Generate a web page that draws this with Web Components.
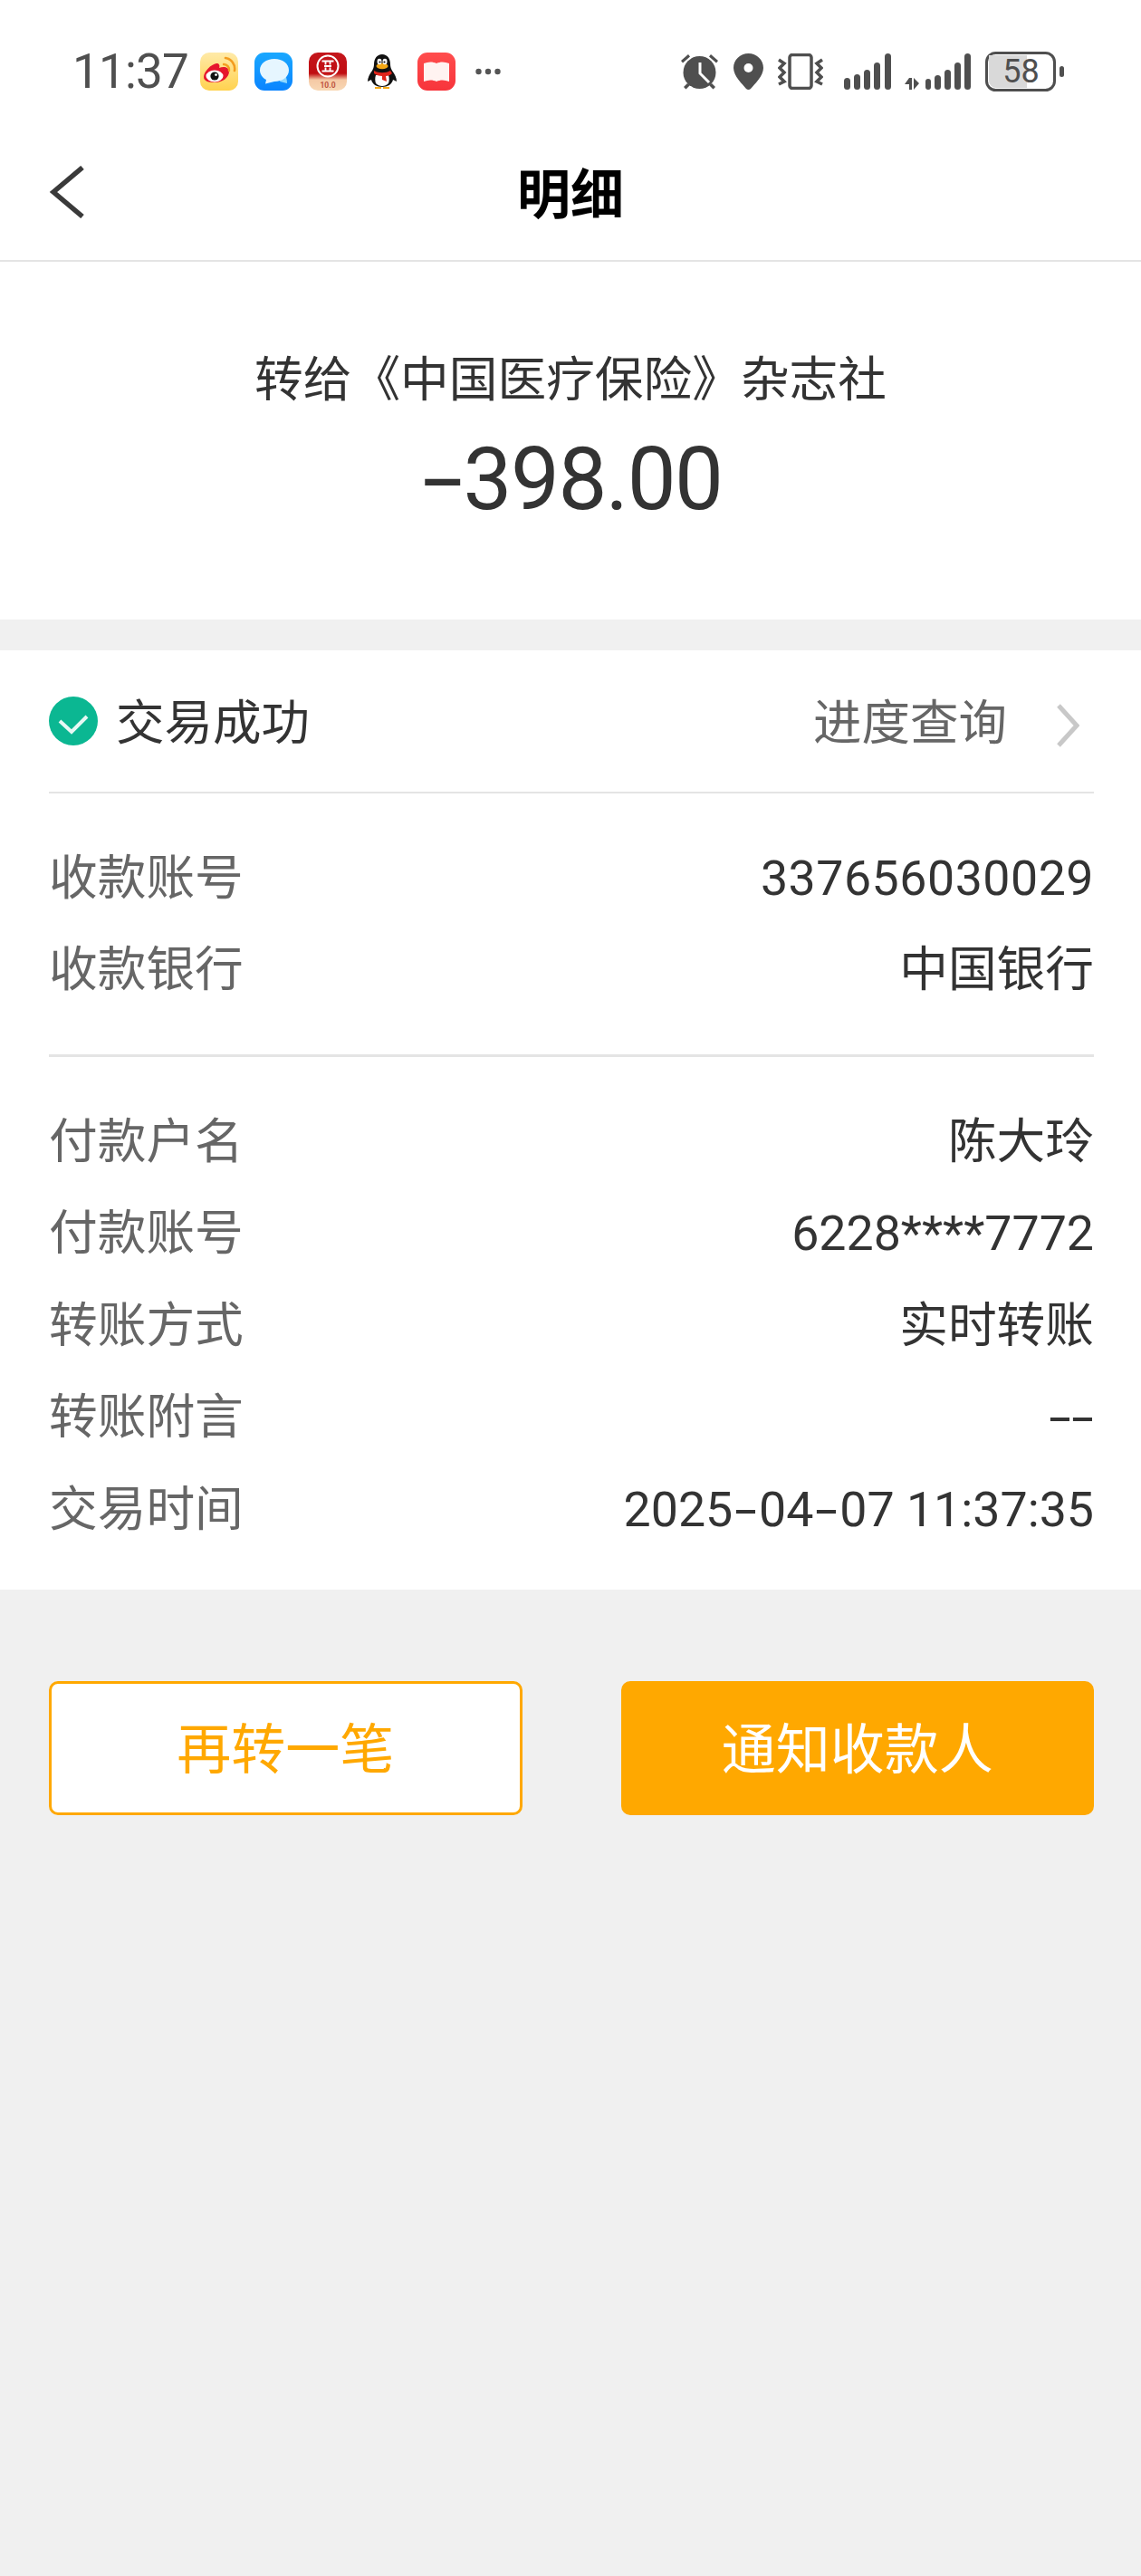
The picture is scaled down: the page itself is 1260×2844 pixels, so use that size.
<!DOCTYPE html>
<html lang="zh">
<head>
<meta charset="utf-8">
<title>明细</title>
<style>
  html, body { margin: 0; padding: 0; background: #f0f0f0; }
  body {
    width: 1260px;
    min-height: 2844px;
    font-family: Roboto, "Noto Sans CJK SC", sans-serif;
  }
</style>
</head>
<body>
<status-bar></status-bar>
<nav-bar>明细</nav-bar>
<amount-head payee="转给《中国医疗保险》杂志社" amount="398.00"></amount-head>
<detail-card>
  <trade-state>交易成功</trade-state>
  <detail-group>
    <detail-row num label="收款账号">337656030029</detail-row>
    <detail-row label="收款银行">中国银行</detail-row>
  </detail-group>
  <detail-group>
    <detail-row label="付款户名">陈大玲</detail-row>
    <detail-row label="付款账号">6228****7772</detail-row>
    <detail-row label="转账方式">实时转账</detail-row>
    <detail-row label="转账附言"><span class="dash sm">-</span><span class="dash sm">-</span></detail-row>
    <detail-row label="交易时间">2025<span class="dash">-</span>04<span class="dash">-</span>07 11:37:35</detail-row>
  </detail-group>
</detail-card>
<action-bar>
  <action-button>再转一笔</action-button>
  <action-button primary>通知收款人</action-button>
</action-bar>

<script>
"use strict";

class StatusBar extends HTMLElement {
  constructor() {
    super();
    this._root = this.attachShadow({ mode: "open" });
    this._root.innerHTML = this._template;
  }

  get _template() {
    return /*html*/ `
      <style>
        :host {
          display: flex;
          align-items: center;
          justify-content: space-between;
          height: 140px;
          padding: 18px 85px 0 80px;
          box-sizing: border-box;
          background: #fff;
          color: #4f4f4f;
        }
        .side { display: flex; align-items: center; }
        .time { font: 400 53px/1 Roboto, sans-serif; width: 141px; letter-spacing: -.8px; }
        .apps { display: flex; align-items: center; gap: 18px; }
        .sys { gap: 16px; }
        svg { display: block; }
        .dots { margin-left: 4px; }
        .sig-a { margin-left: 7px; }
        .sig-b { margin-left: -1px; }
      </style>
      <div class="side">
        <span class="time">11:37</span>
        <div class="apps">
          <svg width="42" height="42" viewBox="0 0 42 42">
            <defs><linearGradient id="wb" x1="0" y1="0" x2="0" y2="1"><stop offset="0" stop-color="#ffeaa8"/><stop offset="1" stop-color="#ffd24f"/></linearGradient></defs>
            <rect width="42" height="42" rx="10" fill="url(#wb)"/>
            <path d="M4 27c0-6 8-14 14-15 3 0 4 2 3 5 5-2 11-1 11 4 0 7-8 12-15 12S4 32 4 27z" fill="#e6162d"/>
            <ellipse cx="16" cy="26" rx="9.500" ry="6.500" fill="#fff"/>
            <circle cx="16" cy="26" r="4.600" fill="#111"/>
            <circle cx="17.500" cy="24.600" r="1.400" fill="#fff"/>
            <path d="M26 13a6 6 0 0 1 6 7" fill="none" stroke="#f39c1f" stroke-width="2.400" stroke-linecap="round"/>
            <path d="M28 6a12 12 0 0 1 10 14" fill="none" stroke="#f39c1f" stroke-width="2.600" stroke-linecap="round"/>
          </svg>
          <svg width="42" height="42" viewBox="0 0 42 42">
            <defs><linearGradient id="ms" x1="0" y1="0" x2="0" y2="1"><stop offset="0" stop-color="#1aa8ff"/><stop offset="1" stop-color="#0a84ff"/></linearGradient></defs>
            <rect width="42" height="42" rx="11" fill="url(#ms)"/>
            <path d="M32 22c3 3 4 8 4 12l-8-2z" fill="#8fd8ff"/>
            <path d="M22 7c9 0 16 5 16 12.500S31 32 22 32l-10 2.500 1-4.500C9 28 6 24 6 19.500 6 12 13 7 22 7z" fill="#e6f6ff"/>
          </svg>
          <svg width="42" height="42" viewBox="0 0 42 42">
            <defs><linearGradient id="ic" x1="0" y1="0" x2="0" y2="1"><stop offset="0" stop-color="#c4161c"/><stop offset=".55" stop-color="#c00d12"/><stop offset=".72" stop-color="#f5c9a5"/><stop offset="1" stop-color="#f8d8b5"/></linearGradient></defs>
            <rect width="42" height="42" rx="10" fill="url(#ic)"/>
            <circle cx="21" cy="15" r="11.500" fill="none" stroke="#fff" stroke-width="2"/>
            <path d="M14.500 9.500h13M14.500 20.500h13M17 15h8M18.500 9.500v4M23.500 9.500v4M18.500 16.500v4M23.500 16.500v4" stroke="#fff" stroke-width="1.800" fill="none"/>
            <text x="21" y="39" text-anchor="middle" font-family="Roboto, sans-serif" font-size="8.500" font-weight="700" fill="#c0543f">10.0</text>
          </svg>
          <svg width="42" height="42" viewBox="0 0 42 42">
            <path d="M21 2c-6 0-9 5-9 11 0 3-1 5-2 7-3 4-5 8-5 12l4-2c1 5 6 8 12 8s11-3 12-8l4 2c0-4-2-8-5-12-1-2-2-4-2-7 0-6-3-11-9-11z" fill="#111"/>
            <path d="M14 25c-1 3-1 6 0 9 2 2 4 3 7 3s5-1 7-3c1-3 1-6 0-9z" fill="#fff"/>
            <ellipse cx="21" cy="15" rx="6.500" ry="3.200" fill="#f5a815"/>
            <path d="M12 20c5 3 13 3 18 0l2 3c-2 2-4 3-7 3l1 6-5-2v-4c-3 0-7-1-9-3z" fill="#e1251b"/>
            <ellipse cx="18" cy="10" rx="2.500" ry="3.200" fill="#fff"/>
            <ellipse cx="24" cy="10" rx="2.500" ry="3.200" fill="#fff"/>
            <circle cx="18.500" cy="10.500" r="1.100" fill="#111"/>
            <circle cx="23.500" cy="10.500" r="1.100" fill="#111"/>
            <path d="M13 38h7v2h-7zM22 38h7v2h-7z" fill="#f5a815"/>
          </svg>
          <svg width="42" height="42" viewBox="0 0 42 42">
            <defs><linearGradient id="bk" x1="0" y1="0" x2="0" y2="1"><stop offset="0" stop-color="#ff4d4d"/><stop offset="1" stop-color="#f7343b"/></linearGradient></defs>
            <rect width="42" height="42" rx="11" fill="url(#bk)"/>
            <path d="M7 12c5-2 10-2 14 0 4-2 9-2 14 0v20c-5-2-10-2-14 0-4-2-9-2-14 0z" fill="#fff3f1"/>
          </svg>
          <svg class="dots" width="28" height="8" viewBox="0 0 28 8" fill="#555">
            <circle cx="3.500" cy="4" r="3.200"/><circle cx="14" cy="4" r="3.200"/><circle cx="24.500" cy="4" r="3.200"/>
          </svg>
        </div>
      </div>
      <div class="side sys">
        <svg width="43" height="40" viewBox="0 0 43 40" fill="#4f4f4f">
          <path d="M1 8l8-7 2 2.500-8 7zM42 8l-8-7-2 2.500 8 7z"/>
          <path d="M8 33l-4 4 2.500 2.500 4.500-4.500zM35 33l4 4-2.500 2.500-4.500-4.500z"/>
          <circle cx="21.500" cy="21" r="18"/>
          <path d="M22 10v12l10 10" fill="none" stroke="#fff" stroke-width="3"/>
        </svg>
        <svg width="33" height="40" viewBox="0 0 33 40">
          <path d="M16.500 0C7.400 0 0 7 0 16c0 9 10 18 14 23 1.300 1.300 3.700 1.300 5 0 4-5 14-14 14-23C33 7 25.600 0 16.500 0z" fill="#4f4f4f"/>
          <circle cx="16.500" cy="16" r="5" fill="#fff"/>
        </svg>
        <svg width="50" height="40" viewBox="0 0 50 40" fill="none" stroke="#4f4f4f">
          <rect x="13" y="1.500" width="24" height="37" rx="3" stroke-width="3.500"/>
          <path d="M1 7l6 4-5 5 5 5-5 5 5 5-6 3M49 7l-6 4 5 5-5 5 5 5-5 5 6 3" stroke-width="3.500"/>
        </svg>
        <svg class="sig-a" width="52" height="40" viewBox="0 0 52 40" fill="#4f4f4f">
          <rect x="0" y="27" width="7" height="13" rx="3.500"/>
          <rect x="11" y="23" width="7" height="17" rx="3.500"/>
          <rect x="22" y="18" width="7" height="22" rx="3.500"/>
          <rect x="33" y="10" width="7" height="30" rx="3.500"/>
          <rect x="45" y="0" width="7" height="40" rx="3.500"/>
        </svg>
        <svg class="sig-b" width="73" height="40" viewBox="0 0 73 40" fill="#4f4f4f">
          <path d="M5 27v13h3V27zM0 34l5-7v7zM10 27v13l6-7z"/>
          <rect x="23" y="28" width="6" height="12" rx="3"/>
          <rect x="33" y="24" width="7" height="16" rx="3.500"/>
          <rect x="44" y="18" width="7" height="22" rx="3.500"/>
          <rect x="55" y="10" width="7" height="30" rx="3.500"/>
          <rect x="66" y="0" width="7" height="40" rx="3.500"/>
        </svg>
        <svg width="87" height="44" viewBox="0 0 87 44">
          <rect x="1.500" y="1.500" width="75" height="41" rx="10" fill="#fff" stroke="#4f4f4f" stroke-width="3"/>
          <path d="M4 4h42v36H12a8 8 0 0 1-8-8z" fill="#d9d9d9"/>
          <rect x="82" y="16" width="5" height="12" rx="2.500" fill="#4f4f4f"/>
          <text x="39.500" y="34" text-anchor="middle" font-family="Roboto, sans-serif" font-size="36" fill="#4f4f4f">58</text>
        </svg>
      </div>
    `;
  }
}

class NavBar extends HTMLElement {
  constructor() {
    super();
    this._root = this.attachShadow({ mode: "open" });
    this._root.innerHTML = /*html*/ `
      <style>
        :host {
          display: block;
          position: relative;
          height: 147px;
          background: #fff;
          border-bottom: 2px solid #e4e4e4;
        }
        .title {
          display: block;
          text-align: center;
          font: 700 59px/142px "Noto Sans CJK SC", sans-serif;
          color: #000;
        }
        svg { position: absolute; left: 53px; top: 43px; }
      </style>
      <svg width="40" height="58" viewBox="0 0 40 58" fill="none" stroke="#3a3a3a" stroke-width="5.500">
        <path d="M38 2L6 29l32 27"/>
      </svg>
      <span class="title"><slot></slot></span>
    `;
  }
}

class AmountHead extends HTMLElement {
  constructor() {
    super();
    this._root = this.attachShadow({ mode: "open" });
    this._root.innerHTML = /*html*/ `
      <style>
        :host {
          display: flex;
          flex-direction: column;
          align-items: center;
          height: 395px;
          box-sizing: border-box;
          padding-top: 88px;
          background: #fff;
          color: #333;
        }
        .payee { font: 400 53.700px/76px "Noto Sans CJK SC", sans-serif; }
        .amount { font: 400 96px/110px Roboto, sans-serif; letter-spacing: -1.500px; margin: 21px 0 0 13px; }
        .dash { display: inline-block; transform: scaleX(1.7); margin-right: 11px; }
      </style>
      <div class="payee"></div>
      <div class="amount"><span class="dash">-</span><span class="num"></span></div>
    `;
  }

  connectedCallback() {
    this._root.querySelector(".payee").textContent = this.getAttribute("payee");
    this._root.querySelector(".num").textContent = this.getAttribute("amount");
  }
}

class DetailCard extends HTMLElement {
  constructor() {
    super();
    this._root = this.attachShadow({ mode: "open" });
    this._root.innerHTML = /*html*/ `
      <style>
        :host {
          display: block;
          margin-top: 34px;
          padding: 0 52px 37px 54px;
          background: #fff;
        }
      </style>
      <slot></slot>
    `;
  }
}

class TradeState extends HTMLElement {
  constructor() {
    super();
    this._root = this.attachShadow({ mode: "open" });
    this._root.innerHTML = /*html*/ `
      <style>
        :host {
          display: flex;
          align-items: center;
          height: 156px;
          border-bottom: 2px solid #e4e4e4;
          font: 400 53.500px/1 "Noto Sans CJK SC", sans-serif;
          color: #333;
        }
        .check { margin-right: 20px; }
        .text { position: relative; top: -2px; }
        .link { margin-left: auto; color: #666; }
        .more { margin: 10px 16px 0 54px; }
      </style>
      <svg class="check" width="54" height="54" viewBox="0 0 54 54">
        <circle cx="27" cy="27" r="27" fill="#0bb792"/>
        <path d="M12 27l13 12 17-17" fill="none" stroke="#fff" stroke-width="4" opacity=".9"/>
      </svg>
      <span class="text"><slot></slot></span>
      <span class="text link">进度查询</span>
      <svg class="more" width="26" height="48" viewBox="0 0 26 48" fill="none" stroke="#c8c8c8" stroke-width="5">
        <path d="M3 2l20 22L3 46"/>
      </svg>
    `;
  }
}

class DetailGroup extends HTMLElement {
  constructor() {
    super();
    this._root = this.attachShadow({ mode: "open" });
    this._root.innerHTML = /*html*/ `
      <style>
        :host {
          display: block;
          padding: 43px 0 42px;
          border-bottom: 3px solid #e4e4e4;
        }
        :host(:last-child) { border-bottom: 0; padding-bottom: 0; }
      </style>
      <slot></slot>
    `;
  }
}

class DetailRow extends HTMLElement {
  constructor() {
    super();
    this._root = this.attachShadow({ mode: "open" });
    this._root.innerHTML = /*html*/ `
      <style>
        :host {
          display: flex;
          align-items: center;
          justify-content: space-between;
          height: 101.500px;
          font: 400 53.700px/1 Roboto, "Noto Sans CJK SC", sans-serif;
        }
        :host([num]) .value { letter-spacing: .5px; }
        .label { color: #666; }
        .value { color: #333; }
        ::slotted(.dash) { display: inline-block; transform: scaleX(1.65); margin: 0 7px; }
        ::slotted(.sm) { margin: 0 5px; }
      </style>
      <span class="label"></span>
      <span class="value"><slot></slot></span>
    `;
  }

  connectedCallback() {
    this._root.querySelector(".label").textContent = this.getAttribute("label");
  }
}

class ActionBar extends HTMLElement {
  constructor() {
    super();
    this._root = this.attachShadow({ mode: "open" });
    this._root.innerHTML = /*html*/ `
      <style>
        :host {
          display: flex;
          gap: 109px;
          padding: 101px 52px 0 54px;
        }
      </style>
      <slot></slot>
    `;
  }
}

class ActionButton extends HTMLElement {
  constructor() {
    super();
    this._root = this.attachShadow({ mode: "open" });
    this._root.innerHTML = /*html*/ `
      <style>
        :host {
          flex: 1;
          display: flex;
          align-items: center;
          justify-content: center;
          height: 148px;
          box-sizing: border-box;
          padding-bottom: 5px;
          border: 3px solid #ffa800;
          border-radius: 10px;
          background: #fff;
          color: #ffa800;
          font: 400 60px/1 "Noto Sans CJK SC", sans-serif;
        }
        :host([primary]) { background: #ffa800; color: #fff; }
      </style>
      <slot></slot>
    `;
  }
}

customElements.define("status-bar", StatusBar);
customElements.define("nav-bar", NavBar);
customElements.define("amount-head", AmountHead);
customElements.define("detail-card", DetailCard);
customElements.define("trade-state", TradeState);
customElements.define("detail-group", DetailGroup);
customElements.define("detail-row", DetailRow);
customElements.define("action-bar", ActionBar);
customElements.define("action-button", ActionButton);
</script>
</body>
</html>
